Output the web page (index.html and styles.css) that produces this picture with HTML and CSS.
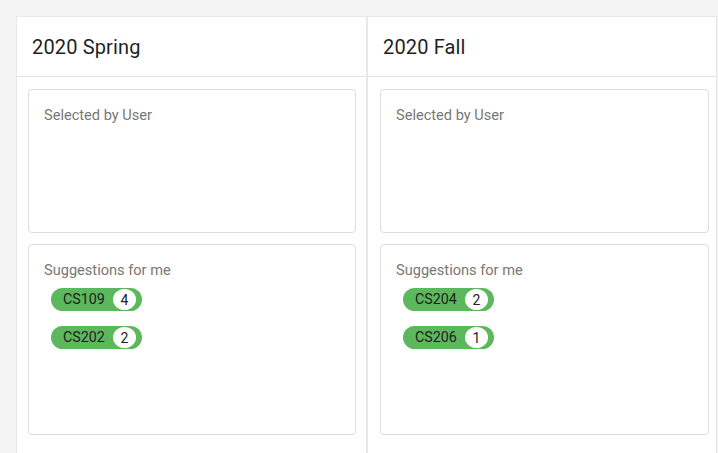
FILE: index.html
```html
<!DOCTYPE html>
<html lang="en">
<head>
<meta charset="utf-8">
<title>Semester Plan</title>
<link rel="stylesheet" href="styles.css">
</head>
<body>
<div class="board">
  <section class="column">
    <header class="col-header"><h2 class="col-title">2020 Spring</h2></header>
    <div class="col-body">
      <div class="box box-selected">
        <div class="box-label">Selected by User</div>
      </div>
      <div class="box box-suggest">
        <div class="box-label">Suggestions for me</div>
        <div class="chips">
          <span class="chip"><span class="chip-text">CS109</span><span class="badge">4</span></span>
          <span class="chip"><span class="chip-text">CS202</span><span class="badge">2</span></span>
        </div>
      </div>
    </div>
  </section>
  <section class="column column-last">
    <header class="col-header"><h2 class="col-title">2020 Fall</h2></header>
    <div class="col-body">
      <div class="box box-selected">
        <div class="box-label">Selected by User</div>
      </div>
      <div class="box box-suggest">
        <div class="box-label">Suggestions for me</div>
        <div class="chips">
          <span class="chip"><span class="chip-text">CS204</span><span class="badge">2</span></span>
          <span class="chip"><span class="chip-text">CS206</span><span class="badge">1</span></span>
        </div>
      </div>
    </div>
  </section>
</div>
</body>
</html>
```

FILE: styles.css
```css
html, body {
  margin: 0;
  padding: 0;
}
body {
  background: #f4f4f4;
  font-family: Roboto, "Liberation Sans", sans-serif;
  color: rgba(0, 0, 0, 0.87);
  height: 453px;
  overflow: hidden;
}
.board {
  display: flex;
  padding: 16px 0 0 16px;
  height: 437px;
}
.column {
  width: 351px;
  box-sizing: border-box;
  background: #fff;
  border: 1px solid #e8e8e8;
  border-bottom: none;
  display: flex;
  flex-direction: column;
  flex: none;
}
.column-last {
  width: 350px;
}
.col-header {
  height: 59px;
  border-bottom: 1px solid #e2e2e2;
  display: flex;
  align-items: center;
  padding-left: 15px;
}
.col-title {
  margin: 0;
  font-size: 20px;
  font-weight: 400;
  line-height: 32px;
  color: #1f1f1f;
  letter-spacing: 0.15px;
}
.col-body {
  padding: 12px 10px 0 11px;
  display: flex;
  flex-direction: column;
  gap: 11px;
}
.column-last .col-body {
  padding-left: 12px;
  padding-right: 7px;
}
.box {
  border: 1px solid #dcdcdc;
  border-radius: 4px;
  padding: 15px 15px;
  box-sizing: border-box;
}
.box-selected {
  height: 144px;
}
.box-suggest {
  height: 191px;
}
.box-label {
  font-size: 14.6px;
  line-height: 20px;
  color: #777;
}
.chips {
  display: flex;
  flex-direction: column;
  align-items: flex-start;
  padding-top: 8px;
  gap: 15px;
  padding-left: 7px;
}
.chip {
  display: inline-flex;
  align-items: center;
  height: 23px;
  border-radius: 12px;
  background: #5cb85c;
  padding: 0 6px 0 12px;
  gap: 8px;
}
.chip-text {
  font-size: 14.3px;
  color: #1d1d1d;
  line-height: 23px;
}
.badge {
  width: 23px;
  height: 21px;
  border-radius: 50%;
  background: #fff;
  display: flex;
  align-items: center;
  justify-content: center;
  font-size: 14px;
  color: #222;
}
```
